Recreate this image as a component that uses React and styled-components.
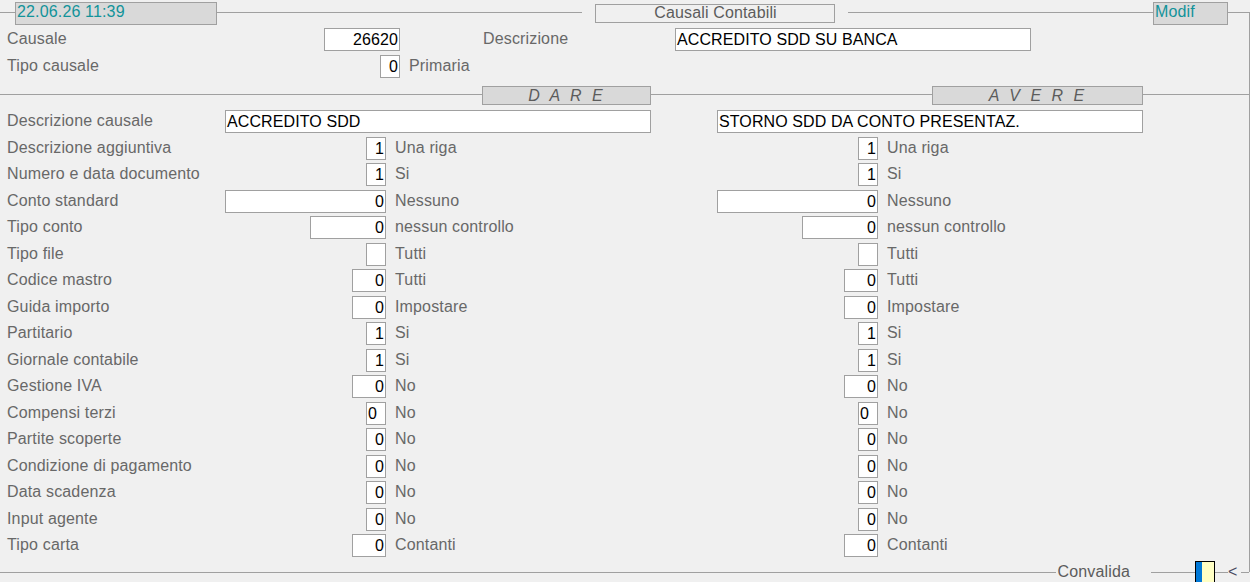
import React from "react";
import styled, { createGlobalStyle } from "styled-components";

const GlobalStyle = createGlobalStyle`
  html, body {
    margin: 0;
    background: #f0f0f0;
  }
  body {
    font-family: "Liberation Sans", Arial, sans-serif;
    font-size: 16px;
    color: #686868;
  }
`;

const Screen = styled.div`
  width: 1250px;
  height: 582px;
  box-sizing: border-box;
  padding-top: 12px;
  overflow: hidden;
`;

const Frame = styled.div`
  display: flow-root;
  box-sizing: border-box;
  height: 560px;
  border-right: 1px solid #a0a0a0;
`;

const Bar = styled.div`
  display: flex;
  align-items: flex-start;
  height: ${props => props.$h}px;
  margin-top: ${props => props.$mt}px;
`;

const Rule = styled.div`
  flex: ${props => (props.$w ? `0 0 ${props.$w}px` : "1 1 0")};
  height: 1px;
  margin-top: ${props => props.$top}px;
  margin-left: ${props => props.$ml || 0}px;
  background: #a0a0a0;
`;

const HeadBox = styled.div`
  flex: none;
  box-sizing: border-box;
  width: ${props => props.$w}px;
  height: ${props => props.$h}px;
  margin-top: ${props => props.$mt || 0}px;
  margin-left: ${props => props.$ml || 0}px;
  border: 1px solid #a0a0a0;
  background: ${props => props.$bg || "#d9d9d9"};
  color: ${props => props.$color || "#5c5c5c"};
  line-height: ${props => props.$lh || 18}px;
  padding-left: 1px;
  text-align: ${props => props.$align || "left"};
  font-style: ${props => (props.$italic ? "italic" : "normal")};
  letter-spacing: ${props => props.$ls || 0.15}px;
  white-space: pre;
`;

const TopRow = styled.div`
  display: flex;
  align-items: center;
  height: 23px;
  padding-left: 7px;
  margin-top: ${props => props.$mt}px;
`;

const TopSlot = styled.div`
  flex: none;
  width: ${props => props.$w}px;
  display: flex;
  justify-content: space-between;
  align-items: center;
`;

const Label = styled.span`
  flex: none;
  width: ${props => (props.$w ? `${props.$w}px` : "auto")};
  margin-left: ${props => props.$ml || 0}px;
  line-height: 21px;
  padding-bottom: 2px;
  letter-spacing: 0.15px;
  white-space: nowrap;
`;

const Field = styled.div`
  flex: none;
  box-sizing: border-box;
  width: ${props => props.$w}px;
  height: 23px;
  border: 1px solid #a0a0a0;
  background: #ffffff;
  color: #000000;
  line-height: 21px;
  padding: 0 1px;
  text-align: ${props => props.$align || "right"};
  letter-spacing: 0.1px;
  white-space: nowrap;
  overflow: hidden;
`;

const Note = styled.span`
  margin-left: 9px;
  line-height: 21px;
  padding-bottom: 2px;
  letter-spacing: 0.15px;
  white-space: nowrap;
`;

const Grid = styled.div`
  display: grid;
  grid-template-columns: 218px 492px 1fr;
  grid-auto-rows: 23px;
  row-gap: 3.5px;
  align-items: center;
  padding-left: 7px;
  margin-top: 5px;
`;

const Side = styled.div`
  display: flex;
  align-items: center;
`;

const Slot = styled.div`
  flex: none;
  width: ${props => props.$w}px;
  display: flex;
  justify-content: flex-end;
`;

const FootText = styled.span`
  flex: none;
  margin: ${props => props.$mt || 0}px 0 0 ${props => props.$ml || 0}px;
  line-height: 18px;
  color: ${props => props.$color || "#5c5c5c"};
  width: ${props => (props.$w ? `${props.$w}px` : "auto")};
  letter-spacing: 0.15px;
  white-space: nowrap;
`;

const Confirm = styled.div`
  flex: none;
  box-sizing: border-box;
  width: 20px;
  height: 22px;
  border: 1px solid #000000;
  background: linear-gradient(to right, #0078d7 0 6px, #ffffc4 6px);
`;

const rows = [
  { label: "Descrizione aggiuntiva", w: 20, v: "1", note: "Una riga" },
  { label: "Numero e data documento", w: 20, v: "1", note: "Si" },
  { label: "Conto standard", w: 161, v: "0", note: "Nessuno" },
  { label: "Tipo conto", w: 76, v: "0", note: "nessun controllo" },
  { label: "Tipo file", w: 20, v: "", note: "Tutti" },
  { label: "Codice mastro", w: 34, v: "0", note: "Tutti" },
  { label: "Guida importo", w: 34, v: "0", note: "Impostare" },
  { label: "Partitario", w: 20, v: "1", note: "Si" },
  { label: "Giornale contabile", w: 20, v: "1", note: "Si" },
  { label: "Gestione IVA", w: 34, v: "0", note: "No" },
  { label: "Compensi terzi", w: 20, v: "0", note: "No", align: "left" },
  { label: "Partite scoperte", w: 20, v: "0", note: "No" },
  { label: "Condizione di pagamento", w: 20, v: "0", note: "No" },
  { label: "Data scadenza", w: 20, v: "0", note: "No" },
  { label: "Input agente", w: 20, v: "0", note: "No" },
  { label: "Tipo carta", w: 34, v: "0", note: "Contanti" },
];

const SideCell = ({ row }) => (
  <Side>
    <Slot $w={161}>
      <Field $w={row.w} $align={row.align}>{row.v}</Field>
    </Slot>
    <Note>{row.note}</Note>
  </Side>
);

const App = () => {
  return (
    <Screen>
      <GlobalStyle />
      <Frame>
        <Bar $h={23} $mt={-10}>
          <Rule $w={15} $top={10} />
          <HeadBox $w={202} $h={23} $color="#12939a">22.06.26 11:39</HeadBox>
          <Rule $w={365} $top={10} />
          <HeadBox $w={240} $h={19} $mt={2} $ml={13} $lh={16} $bg="#f0f0f0" $align="center">
            Causali Contabili
          </HeadBox>
          <Rule $w={305} $top={10} $ml={13} />
          <HeadBox $w={75} $h={23} $color="#12939a">Modif</HeadBox>
          <Rule $top={10} />
        </Bar>

        <TopRow $mt={3}>
          <TopSlot $w={393}>
            <Label>Causale</Label>
            <Field $w={76}>26620</Field>
          </TopSlot>
          <Label $w={192} $ml={83}>Descrizione</Label>
          <Field $w={356} $align="left">ACCREDITO SDD SU BANCA</Field>
        </TopRow>
        <TopRow $mt={4}>
          <TopSlot $w={393}>
            <Label>Tipo causale</Label>
            <Field $w={20}>0</Field>
          </TopSlot>
          <Note>Primaria</Note>
        </TopRow>

        <Bar $h={19} $mt={8}>
          <Rule $w={482} $top={8} />
          <HeadBox $w={169} $h={19} $lh={17} $align="center" $italic $ls={3}>D A R E</HeadBox>
          <Rule $w={281} $top={8} />
          <HeadBox $w={211} $h={19} $lh={17} $align="center" $italic $ls={3}>A V E R E</HeadBox>
          <Rule $top={8} />
        </Bar>

        <Grid>
          <Label>Descrizione causale</Label>
          <Side>
            <Field $w={426} $align="left">ACCREDITO SDD</Field>
          </Side>
          <Side>
            <Field $w={426} $align="left">STORNO SDD DA CONTO PRESENTAZ.</Field>
          </Side>
          {rows.map(row => (
            <React.Fragment key={row.label}>
              <Label>{row.label}</Label>
              <SideCell row={row} />
              <SideCell row={row} />
            </React.Fragment>
          ))}
        </Grid>

        <Bar $h={22} $mt={4}>
          <Rule $top={11} />
          <FootText $mt={2} $ml={1}>Convalida</FootText>
          <Rule $w={44} $top={11} $ml={21} />
          <Confirm />
          <Rule $w={13} $top={11} />
          <FootText $mt={2} $w={13} $color="#4a4a60">&lt;</FootText>
          <Rule $w={8} $top={11} />
        </Bar>
      </Frame>
    </Screen>
  );
};

export default App;
